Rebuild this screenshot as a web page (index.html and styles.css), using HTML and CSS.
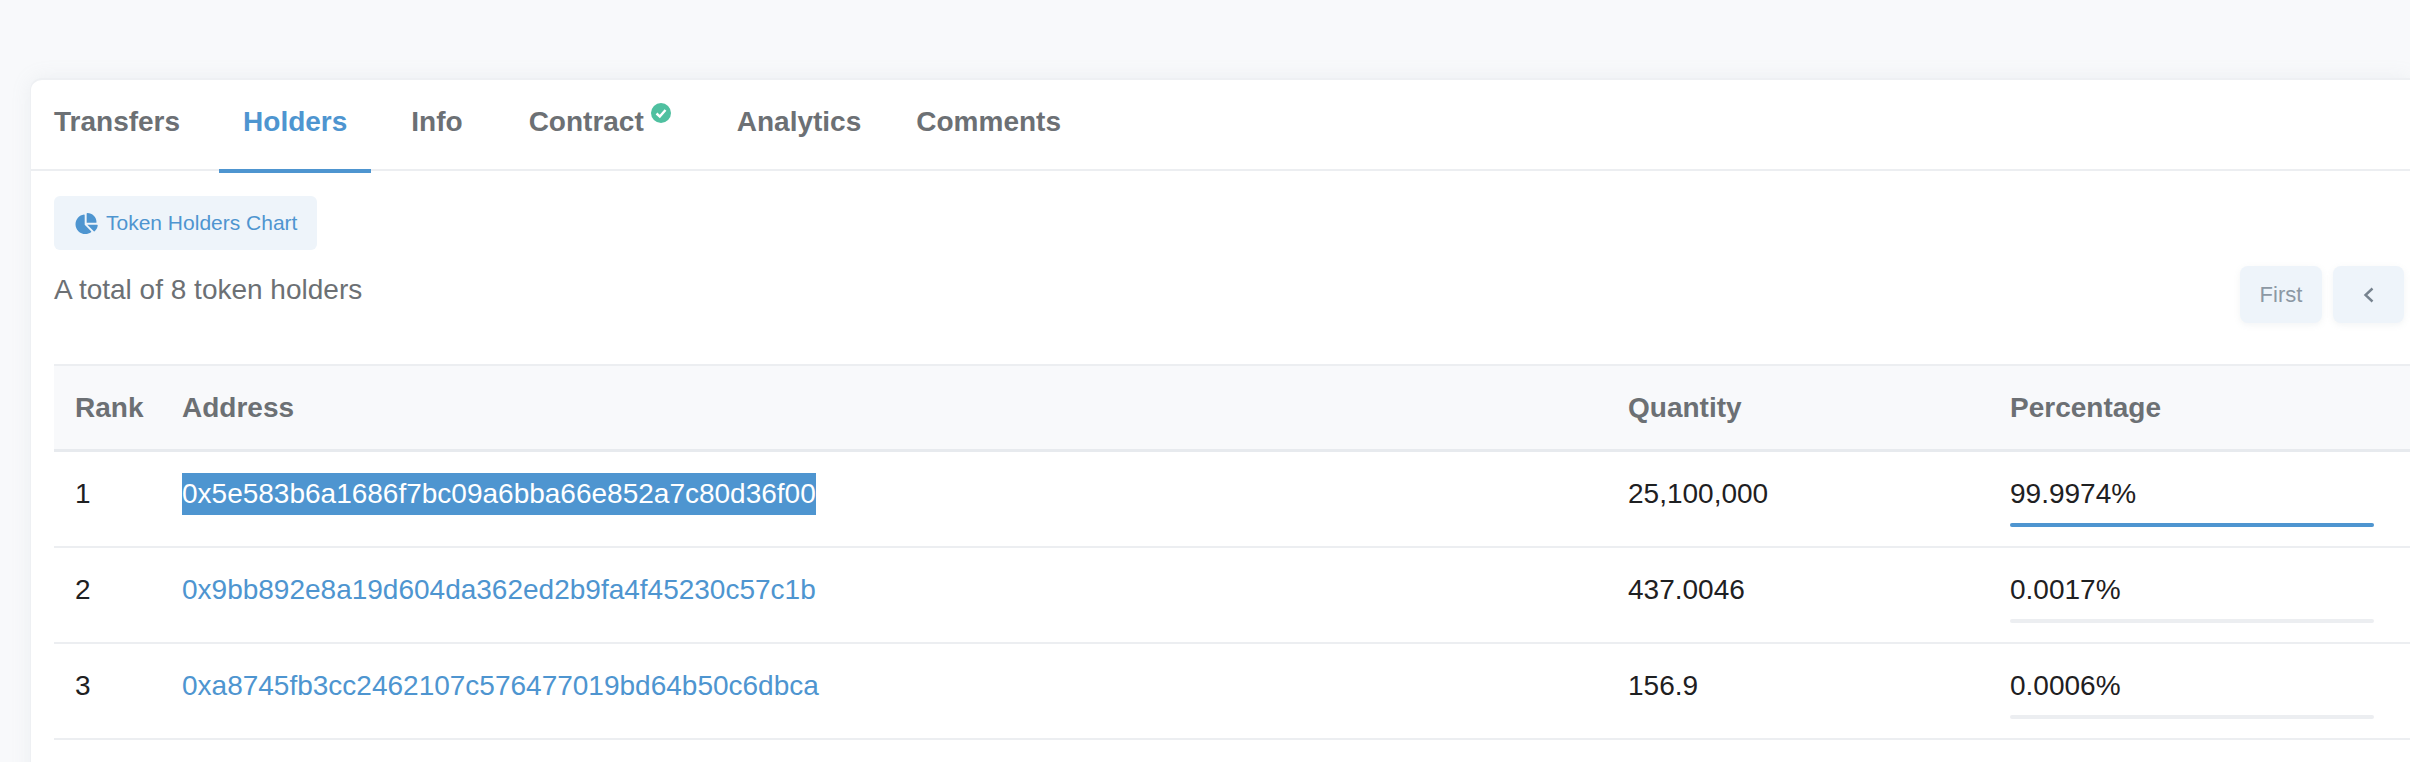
FILE: index.html
```html
<!DOCTYPE html>
<html lang="en">
<head>
    <meta charset="UTF-8">
    <title>Token Holders</title>
    <link rel="stylesheet" href="styles.css">
</head>
<body>
    <div class="card">
        <!-- tabs -->
        <ul class="tabs">
            <li class="tab">Transfers</li>
            <li class="tab active">Holders</li>
            <li class="tab tab-info">Info</li>
            <li class="tab tab-contract">Contract
                <svg class="verified" viewBox="0 0 20 20">
                    <circle cx="10" cy="10" r="10" fill="#4fc0a0"/>
                    <polyline points="5.5,10.5 8.8,13.5 14.5,7" fill="none" stroke="#fff" stroke-width="2.4"/>
                </svg>
            </li>
            <li class="tab tab-analytics">Analytics</li>
            <li class="tab">Comments</li>
        </ul>

        <div class="card-body">
            <button class="chart-button">
                <svg class="pie" viewBox="0 0 576 512"><path fill="#4e95d0" d="M304 240V16.6c0-9 7-16.6 16-16.6C443.7 0 544 100.3 544 224c0 9-7.6 16-16.6 16H304zM32 272C32 150.7 122.1 50.3 239 34.3c9.2-1.3 17 6.1 17 15.4V288L412.5 444.5c6.7 6.7 6.2 17.7-1.5 23.1C371.8 495.6 323.8 512 272 512C139.5 512 32 404.6 32 272zm526.4 16c9.3 0 16.6 7.8 15.4 17c-7.7 55.9-34.6 105.6-73.9 142.3c-6 5.6-15.4 5.2-21.2-.7L320 288H558.4z"/></svg>
                Token Holders Chart
            </button>

            <div class="toolbar">
                <div class="total">A total of 8 token holders</div>
                <div class="pager">
                    <span class="page-btn first">First</span>
                    <span class="page-btn prev">
                        <svg class="chevron" viewBox="0 0 12 16"><polyline points="9.5,1.5 2.5,8 9.5,14.5" fill="none" stroke="#77838f" stroke-width="2.4"/></svg>
                    </span>
                </div>
            </div>

            <table class="holders">
                <thead>
                    <tr>
                        <th class="col-rank">Rank</th>
                        <th class="col-address">Address</th>
                        <th class="col-quantity">Quantity</th>
                        <th>Percentage</th>
                    </tr>
                </thead>
                <tbody>
                    <tr>
                        <td>1</td>
                        <td><a class="address selected">0x5e583b6a1686f7bc09a6bba66e852a7c80d36f00</a></td>
                        <td>25,100,000</td>
                        <td>99.9974%<div class="bar"><div class="fill" style="width: 100%"></div></div></td>
                    </tr>
                    <tr>
                        <td>2</td>
                        <td><a class="address">0x9bb892e8a19d604da362ed2b9fa4f45230c57c1b</a></td>
                        <td>437.0046</td>
                        <td>0.0017%<div class="bar"></div></td>
                    </tr>
                    <tr>
                        <td>3</td>
                        <td><a class="address">0xa8745fb3cc2462107c576477019bd64b50c6dbca</a></td>
                        <td>156.9</td>
                        <td>0.0006%<div class="bar"></div></td>
                    </tr>
                </tbody>
            </table>
        </div>
    </div>
</body>
</html>
```

FILE: styles.css
```css
/* page */
html, body {
    height: 100%;
}

body {
    margin: 0;
    padding: 78px 0 0 30px;
    box-sizing: border-box;
    overflow: hidden;
    background-color: #f8f9fb;
    font-family: "Liberation Sans", Arial, sans-serif;
    font-size: 28px;
    color: #1e2022;
}

/* card */
.card {
    height: 720px;
    border-top: 2px solid #eef0f3;
    border-left: 1px solid #eef0f3;
    border-radius: 12px 0 0 0;
    background-color: #fff;
    box-shadow: 0 0 20px rgba(151, 164, 175, 0.12);
}

/* tabs */
.tabs {
    display: flex;
    gap: 16px;
    height: 89px;
    margin: 0;
    padding: 0 0 0 23px;
    border-bottom: 2px solid #eceef1;
    list-style: none;
}

.tab {
    display: flex;
    align-items: flex-start;
    padding: 26px 24px 0;
    font-weight: bold;
    color: #6c7074;
}

.tab:first-child {
    padding: 26px 23px 0 0;
}

.tab.active {
    height: 63px;
    border-bottom: 4px solid #4e95d0;
    color: #4e95d0;
}

.tab-info {
    padding-right: 26px;
}

.tab-contract {
    padding-right: 26px;
}

.tab-analytics {
    padding-right: 15px;
}

.verified {
    width: 20px;
    height: 20px;
    margin: -3px 0 0 7px;
}

/* card body */
.card-body {
    padding: 25px 0 0 23px;
}

.chart-button {
    display: flex;
    align-items: center;
    width: 263px;
    height: 54px;
    padding: 0 0 0 20px;
    border: none;
    border-radius: 6px;
    background-color: #eef4fa;
    font-family: inherit;
    font-size: 21px;
    color: #4e95d0;
}

.pie {
    width: 24px;
    height: 21px;
    margin-right: 8px;
}

/* total + pager */
.toolbar {
    display: flex;
    justify-content: space-between;
    height: 57px;
    margin: 16px 0 41px;
}

.total {
    padding-top: 4px;
    line-height: 40px;
    color: #6c7074;
}

.pager {
    display: flex;
    gap: 11px;
    padding-right: 6px;
}

.page-btn {
    display: flex;
    align-items: center;
    justify-content: center;
    height: 57px;
    border-radius: 8px;
    background-color: #eef4fa;
    box-shadow: 0 2px 6px rgba(151, 164, 175, 0.12);
    font-size: 22px;
    color: #8c98a4;
}

.first {
    width: 82px;
}

.prev {
    width: 71px;
}

.chevron {
    width: 12px;
    height: 16px;
}

/* table */
.holders {
    width: 100%;
    table-layout: fixed;
    border-collapse: collapse;
}

.holders th {
    height: 83px;
    padding: 0 21px;
    border-top: 2px solid #eceef1;
    border-bottom: 3px solid #e7eaee;
    background-color: #f8f9fb;
    text-align: left;
    font-weight: bold;
    color: #6c7074;
}

.col-rank {
    width: 65px;
}

.col-address {
    width: 1404px;
}

.col-quantity {
    width: 340px;
}

.holders td {
    padding: 21px 21px 19px;
    border-bottom: 2px solid #eceef1;
    line-height: 42px;
    vertical-align: top;
}

.address {
    color: #4e95d0;
}

.address.selected {
    display: inline-block;
    background-color: #4e95d0;
    color: #fff;
}

/* percentage bar */
.bar {
    width: 364px;
    height: 4px;
    margin-top: 8px;
    border-radius: 2px;
    background-color: #eceef1;
}

.fill {
    height: 100%;
    border-radius: 2px;
    background-color: #4e95d0;
}
```
